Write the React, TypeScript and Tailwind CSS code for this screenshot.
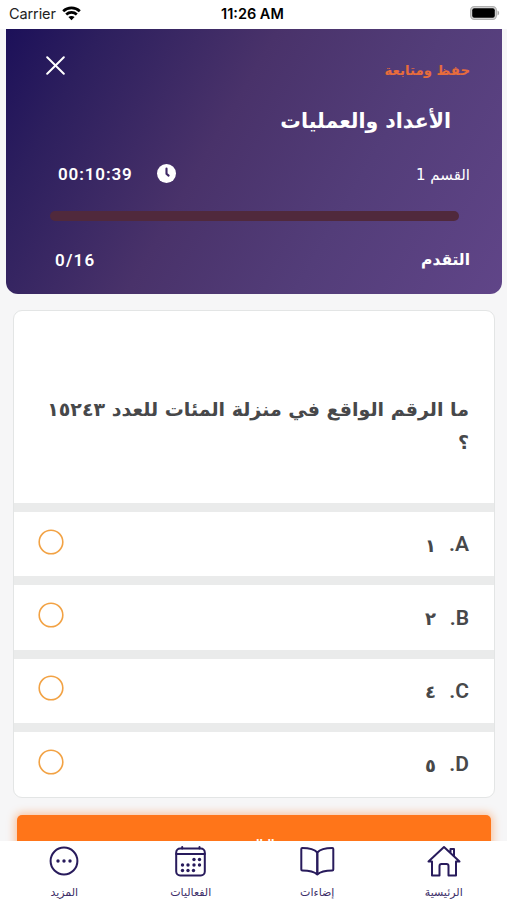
import type { ReactNode } from 'react'

const arabic = "font-['DejaVu_Sans',sans-serif]"
const latin = "font-['Roboto',sans-serif]"

const answers = [
  { letter: 'A', value: '١' },
  { letter: 'B', value: '٢' },
  { letter: 'C', value: '٤' },
  { letter: 'D', value: '٥' },
]

function StatusBar() {
  return (
    <div className="relative flex h-[29px] shrink-0 items-center justify-between bg-white pl-[9px] pr-[7px] pb-[2px] font-['Inter',sans-serif] text-black">
      <div className="flex items-center gap-[6px]">
        <span className="text-[14.5px] tracking-[-0.1px] text-[#222]">Carrier</span>
        <svg className="mb-px" width="19" height="15" viewBox="0 0 19 15" fill="none" stroke="#000" strokeWidth="2.7">
          <path d="M1.2 5.2C5.8.7 13.2.7 17.8 5.2" />
          <path d="M4.2 8.4c3-2.8 7.6-2.8 10.6 0" />
          <path d="M6.4 11.1c1.8-1.5 4.4-1.5 6.2 0L9.5 14.2z" fill="#000" stroke="none" />
        </svg>
      </div>
      <span className="absolute left-[221px] top-[5px] text-[14.5px] font-semibold leading-[18px]">11:26 AM</span>
      <svg className="mb-px" width="30" height="14" viewBox="0 0 30 14">
        <rect x=".7" y=".7" width="25.6" height="12.6" rx="3.5" fill="#ddd" stroke="#b0b0b0" strokeWidth="1.3" />
        <rect x="2.2" y="2.2" width="22.6" height="9.6" rx="2" />
        <path d="M27.5 4.5c2.2 1 2.2 4 0 5z" fill="#aaa" />
      </svg>
    </div>
  )
}

function Header() {
  return (
    <header className="mx-[5px] ml-[6px] flex h-[265px] shrink-0 flex-col rounded-b-[12px] bg-[linear-gradient(120deg,#1c1059_0%,#2d1f5e_15%,#49326a_42%,#533d79_68%,#604588_100%)] pl-[40px] pr-[32px] text-white">
      <div className="flex h-[74px] items-start justify-between">
        <svg className="mt-[27px]" width="19" height="19" viewBox="0 0 19 19" stroke="#fff" strokeWidth="2" strokeLinecap="round">
          <path d="M1.2 1.2l16.6 16.6M17.8 1.2L1.2 17.8" />
        </svg>
        <p dir="rtl" className={`mt-[32px] text-[13.3px] font-bold leading-[20px] text-[#e76c3c] ${arabic}`}>حفظ ومتابعة</p>
      </div>
      <h1 dir="rtl" className={`pr-[19px] text-[20.5px] font-bold leading-[36px] ${arabic}`}>الأعداد والعمليات</h1>
      <div className="mt-[24px] flex h-[24px] items-center justify-between pl-[12px]">
        <div className="flex items-center gap-[24px]">
          <span className={`text-[17px] font-semibold tracking-[0.9px] ${latin}`}>00:10:39</span>
          <svg className="mb-[3px]" width="19" height="19" viewBox="0 0 18 18">
            <circle cx="9" cy="9" r="9" fill="#fff" />
            <path d="M9 4.2v5l2 1.8" fill="none" stroke="#3e2865" strokeWidth="2" strokeLinecap="round" />
          </svg>
        </div>
        <p dir="rtl" className={`text-[15px] ${arabic}`}>القسم 1</p>
      </div>
      <div className="ml-[4px] mr-[11px] mt-[24px] h-[10px] rounded-full bg-[#50293c]" />
      <div className="mt-[23px] flex h-[34px] items-center justify-between pl-[9px]">
        <span className={`text-[17px] font-semibold tracking-[1.2px] ${latin}`}>0/16</span>
        <p dir="rtl" className={`text-[15.5px] font-bold ${arabic}`}>التقدم</p>
      </div>
    </header>
  )
}

function Answer({ letter, value }: { letter: string; value: string }) {
  return (
    <div className="flex h-[73.3px] items-center justify-between border-t-[9.5px] border-[#eaebeb] pl-[24px] pr-[25px]">
      <svg className="mb-[5px]" width="26" height="26" viewBox="0 0 26 26" fill="none">
        <circle cx="13" cy="13" r="11.8" stroke="#f2a244" strokeWidth="1.6" />
      </svg>
      <div dir="rtl" className="flex items-center pt-[2px] text-[#47484a]">
        <span className={`w-[20px] text-[21px] font-semibold ${latin}`}>{letter}.</span>
        <span className={`mr-[13px] text-[18px] font-bold ${arabic}`}>{value}</span>
      </div>
    </div>
  )
}

function NavItem({ label, children }: { label: string; children: ReactNode }) {
  return (
    <div className="flex w-[126.5px] flex-col items-center">
      <svg className="overflow-visible" width="34" height="34" viewBox="0 0 34 34" fill="none" stroke="#281b5c" strokeWidth="2" strokeLinecap="round" strokeLinejoin="round">
        {children}
      </svg>
      <span dir="rtl" className={`mt-[7px] text-[11px] leading-[16px] text-[#3c2d68] ${arabic}`}>{label}</span>
    </div>
  )
}

const dots = [[20.5, 15.5], [26, 15.5], [9, 21], [14.5, 21], [20.5, 21], [26, 21], [9, 26.5], [14.5, 26.5], [20, 26.5]]

function BottomNav() {
  return (
    <nav className="relative flex h-[59px] shrink-0 bg-white pl-px pt-[3px]">
      <NavItem label="المزيد">
        <circle cx="17" cy="17" r="13.4" />
        <g fill="#281b5c" stroke="none">
          <circle cx="11" cy="17" r="1.7" />
          <circle cx="17" cy="17" r="1.7" />
          <circle cx="23" cy="17" r="1.7" />
        </g>
      </NavItem>
      <NavItem label="الفعاليات">
        <rect x="2.2" y="4.5" width="28.6" height="27" rx="4" />
        <path d="M2.2 10h28.6M8.2 3v1.5M25.5 3v1.5" />
        <g fill="#281b5c" stroke="none">
          {dots.map(([x, y]) => <circle key={`${x}-${y}`} cx={x - 0.5} cy={y} r="1.7" />)}
        </g>
      </NavItem>
      <NavItem label="إضاءات">
        <path d="M17.3 8.5C14 4.8 9 4 2.3 4a1 1 0 0 0-1 1v20.5a1 1 0 0 0 1 1c6 0 11 .2 15 4 4-3.8 9-4 15-4a1 1 0 0 0 1-1V5a1 1 0 0 0-1-1C25.6 4 20.600 4.800 17.300 8.500zV30" />
        <path d="M17.3 8.5V30" />
      </NavItem>
      <NavItem label="الرئيسية">
        <path d="M1.500 17.500L17 3l15.500 14.500H29v14h-7.500V22c0-1.300-.7-2-2-2h-5c-1.300 0-2 .7-2 2v9.500H5v-14zM23.500 8.500V5H27v7" />
      </NavItem>
    </nav>
  )
}

export default function App() {
  return (
    <div className="flex h-[900px] w-[507px] flex-col overflow-hidden bg-[#f6f6f7]">
      <StatusBar />
      <Header />
      <main className="flex min-h-0 flex-1 flex-col overflow-hidden px-[13px] pt-[16px]">
        <section className="h-[487.5px] w-[482px] shrink-0 overflow-hidden rounded-[9px] border border-[#e3e5e5] bg-white">
          <div dir="rtl" className={`h-[192px] whitespace-nowrap pr-[25px] pt-[82px] text-[19px] font-bold leading-[33px] text-[#47484a] ${arabic}`}>
            <p>ما الرقم الواقع في منزلة المئات للعدد ١٥٢٤٣</p>
            <p>؟</p>
          </div>
          {answers.map((a) => <Answer key={a.letter} {...a} />)}
        </section>
        <button className={`ml-[4px] mt-[17.5px] flex h-[56px] w-[474px] shrink-0 items-center justify-center rounded-[5px] bg-[#ff7519] pl-[12px] text-[10px] font-bold text-white shadow-[0_0_9px_2px_#ff751966] ${arabic}`}>
          التالي
        </button>
      </main>
      <BottomNav />
    </div>
  )
}
